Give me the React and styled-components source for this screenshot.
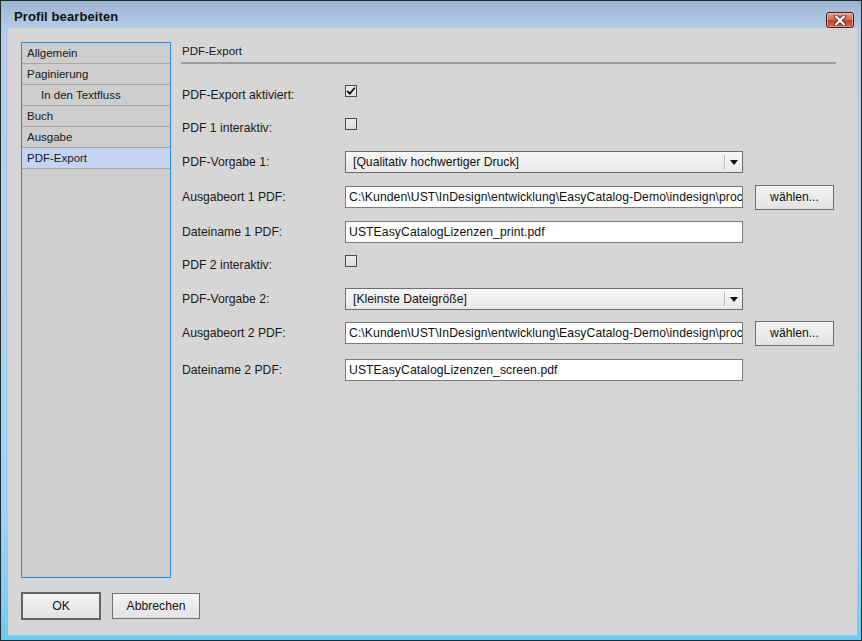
import React from "react";
import styled, { createGlobalStyle } from "styled-components";

const Global = createGlobalStyle`
  html, body { margin: 0; padding: 0; background: #ffffff; }
  body { font-family: "Liberation Sans", Arial, sans-serif; }
  * { box-sizing: border-box; }
`;

const Window = styled.div`
  width: 862px;
  height: 641px;
  border: 1px solid #1f2a33;
  background: linear-gradient(#9db5d1 0px, #b3cbe6 26px, #b2d0ec 200px, #9fd2f1 520px, #6fcbf3 640px);
  display: flex;
  flex-direction: column;
  padding: 0 4px 5px 7px;
`;

const TitleBar = styled.div`
  height: 27px;
  margin: 0 -4px 0 -7px;
  padding: 3px 7px 0 13px;
  display: flex;
  align-items: center;
  justify-content: space-between;
`;

const Title = styled.div`
  font-size: 13px;
  font-weight: bold;
  color: #111;
  letter-spacing: 0.1px;
`;

const CloseBtn = styled.div`
  align-self: flex-start;
  margin-top: 8px;
  width: 28px;
  height: 16px;
  border: 1px solid #4a1c1a;
  border-radius: 3px;
  background: linear-gradient(#e2a08f, #cf6d55 50%, #bf3f27 51%, #d36a4a);
  box-shadow: inset 0 0 0 1px rgba(255, 220, 210, 0.45);
  display: flex;
  align-items: center;
  justify-content: center;
`;

const Content = styled.div`
  flex: 1;
  background: #d6d6d6;
  display: flex;
  flex-direction: column;
  padding: 14px 21px 15px 13px;
`;

const Main = styled.div`
  display: flex;
  gap: 10px;
  height: 536px;
`;

const Sidebar = styled.div`
  width: 150px;
  border: 1px solid #1c8be6;
  background: #cdcdcd;
  display: flex;
  flex-direction: column;
`;

const NavItem = styled.div`
  height: 21px;
  border-bottom: 1px solid #a9a9a9;
  padding-left: ${(p) => (p.$indent ? 19 : 5)}px;
  font-size: 11.5px;
  line-height: 20px;
  color: #1a1a1a;
  background: ${(p) => (p.$active ? "#c3d5f2" : "transparent")};
`;

const Panel = styled.div`
  flex: 1;
  display: flex;
  flex-direction: column;
`;

const Heading = styled.div`
  height: 22px;
  padding: 0 0 2px 1px;
  line-height: 18px;
  font-size: 11.5px;
  color: #1a1a1a;
  border-bottom: 2px solid #9c9c9c;
  margin-bottom: 19px;
`;

const Row = styled.div`
  display: flex;
  align-items: center;
  height: 24px;
  margin-top: ${(p) => p.$mt || 0}px;
`;

const Label = styled.div`
  width: 164px;
  padding-left: 1px;
  font-size: 12.2px;
  color: #1a1a1a;
  white-space: nowrap;
`;

const CheckBox = styled.div`
  align-self: flex-start;
  margin-top: 2px;
  width: 12px;
  height: 12px;
  border: 1px solid #4b4b4b;
  background: linear-gradient(#ececec, #dcdcdc);
  display: flex;
  align-items: center;
  justify-content: center;
`;

const TextInput = styled.div`
  width: 398px;
  height: 22px;
  border: 1px solid #7b7b7b;
  background: #ffffff;
  padding-left: 3px;
  font-size: 12.2px;
  letter-spacing: 0.08px;
  line-height: 20px;
  color: #111;
  white-space: nowrap;
  overflow: hidden;
`;

const Select = styled.div`
  width: 398px;
  height: 22px;
  border: 1px solid #6e6e6e;
  background: linear-gradient(#f6f6f6, #e9e9e9);
  display: flex;
  align-items: stretch;
  font-size: 12.2px;
  color: #111;
`;

const SelectText = styled.div`
  flex: 1;
  padding-left: 7px;
  line-height: 20px;
  white-space: nowrap;
  overflow: hidden;
`;

const SelectArrow = styled.div`
  width: 18px;
  margin: 3px 0;
  border-left: 1px solid #b4b4b4;
  box-shadow: inset 1px 0 0 #fafafa;
  display: flex;
  align-items: center;
  justify-content: center;
`;

const Button = styled.div`
  width: ${(p) => p.$w}px;
  height: ${(p) => p.$h}px;
  border: ${(p) => (p.$default ? "2px solid #656565" : "1px solid #707070")};
  background: linear-gradient(#f3f3f3, #e3e3e3);
  display: flex;
  align-items: center;
  justify-content: center;
  font-size: 12.2px;
  color: #111;
`;

const SideButton = styled(Button)`
  margin-left: 12px;
`;

const Footer = styled.div`
  display: flex;
  align-items: center;
  gap: 11px;
  margin-top: 14px;
  height: 28px;
`;

const Check = () => (
  <svg width="12" height="10" viewBox="0 0 12 10">
    <path d="M1.5 5 L4.5 8.2 L10.5 1" fill="none" stroke="#000" strokeWidth="2" />
  </svg>
);

const Arrow = () => (
  <svg width="8" height="5" viewBox="0 0 8 5">
    <path d="M0 0 H8 L4 5 Z" fill="#111" />
  </svg>
);

const CloseX = () => (
  <svg width="14" height="11" viewBox="0 0 14 11">
    <path d="M3 1.5 L11 9.5 M11 1.5 L3 9.5" stroke="#5a2a24" strokeWidth="4" strokeLinecap="round" />
    <path d="M3 1.5 L11 9.5 M11 1.5 L3 9.5" stroke="#ffffff" strokeWidth="2.2" strokeLinecap="round" />
  </svg>
);

const nav = [
  { t: "Allgemein" },
  { t: "Paginierung" },
  { t: "In den Textfluss", indent: true },
  { t: "Buch" },
  { t: "Ausgabe" },
  { t: "PDF-Export", active: true },
];

const PATH = "C:\\Kunden\\UST\\InDesign\\entwicklung\\EasyCatalog-Demo\\indesign\\proc";

export default function App() {
  return (
    <>
      <Global />
      <Window>
        <TitleBar>
          <Title>Profil bearbeiten</Title>
          <CloseBtn>
            <CloseX />
          </CloseBtn>
        </TitleBar>
        <Content>
          <Main>
            <Sidebar>
              {nav.map((n) => (
                <NavItem key={n.t} $indent={n.indent} $active={n.active}>
                  {n.t}
                </NavItem>
              ))}
            </Sidebar>
            <Panel>
              <Heading>PDF-Export</Heading>
              <Row>
                <Label>PDF-Export aktiviert:</Label>
                <CheckBox>
                  <Check />
                </CheckBox>
              </Row>
              <Row $mt={9}>
                <Label>PDF 1 interaktiv:</Label>
                <CheckBox />
              </Row>
              <Row $mt={10}>
                <Label>PDF-Vorgabe 1:</Label>
                <Select>
                  <SelectText>[Qualitativ hochwertiger Druck]</SelectText>
                  <SelectArrow>
                    <Arrow />
                  </SelectArrow>
                </Select>
              </Row>
              <Row $mt={11}>
                <Label>Ausgabeort 1 PDF:</Label>
                <TextInput>{PATH}</TextInput>
                <SideButton $w={79} $h={25}>wählen...</SideButton>
              </Row>
              <Row $mt={11}>
                <Label>Dateiname 1 PDF:</Label>
                <TextInput>USTEasyCatalogLizenzen_print.pdf</TextInput>
              </Row>
              <Row $mt={9}>
                <Label>PDF 2 interaktiv:</Label>
                <CheckBox />
              </Row>
              <Row $mt={10}>
                <Label>PDF-Vorgabe 2:</Label>
                <Select>
                  <SelectText>[Kleinste Dateigröße]</SelectText>
                  <SelectArrow>
                    <Arrow />
                  </SelectArrow>
                </Select>
              </Row>
              <Row $mt={10}>
                <Label>Ausgabeort 2 PDF:</Label>
                <TextInput>{PATH}</TextInput>
                <SideButton $w={79} $h={25}>wählen...</SideButton>
              </Row>
              <Row $mt={13}>
                <Label>Dateiname 2 PDF:</Label>
                <TextInput>USTEasyCatalogLizenzen_screen.pdf</TextInput>
              </Row>
            </Panel>
          </Main>
          <Footer>
            <Button $default $w={80} $h={28}>OK</Button>
            <Button $w={88} $h={26}>Abbrechen</Button>
          </Footer>
        </Content>
      </Window>
    </>
  );
}
